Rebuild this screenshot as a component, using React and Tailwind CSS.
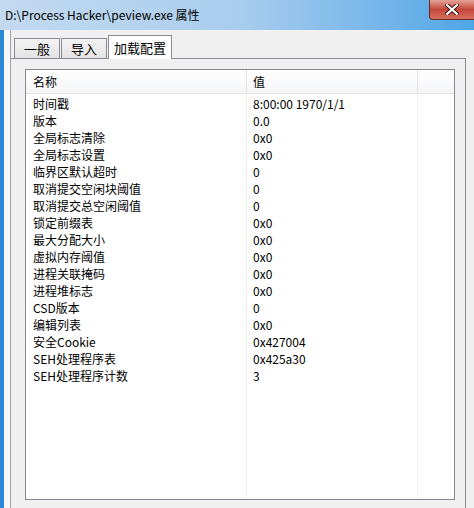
import React from 'react';

const rows = [
  ['时间戳', '8:00:00 1970/1/1'],
  ['版本', '0.0'],
  ['全局标志清除', '0x0'],
  ['全局标志设置', '0x0'],
  ['临界区默认超时', '0'],
  ['取消提交空闲块阈值', '0'],
  ['取消提交总空闲阈值', '0'],
  ['锁定前缀表', '0x0'],
  ['最大分配大小', '0x0'],
  ['虚拟内存阈值', '0x0'],
  ['进程关联掩码', '0x0'],
  ['进程堆标志', '0x0'],
  ['CSD版本', '0'],
  ['编辑列表', '0x0'],
  ['安全Cookie', '0x427004'],
  ['SEH处理程序表', '0x425a30'],
  ['SEH处理程序计数', '3'],
];

const Tab = ({ label, active }) =>
  active ? (
    <div className="relative z-10 -mb-px flex h-[24px] w-[64px] items-center justify-center border border-b-0 border-[#898c95] bg-white text-[13px]">
      {label}
    </div>
  ) : (
    <div className="mt-[3px] flex h-[20px] w-[46px] items-center justify-center border border-b-0 border-[#898c95] bg-gradient-to-b from-[#f3f3f3] to-[#e3e3e3] text-[13px]">
      {label}
    </div>
  );

export default function App() {
  return (
    <div
      className="relative h-[508px] w-[474px] overflow-hidden bg-[#f0f0f0] text-black"
      style={{ fontFamily: '"Noto Sans CJK SC", "Noto Sans", sans-serif' }}
    >
      {/* title bar */}
      <div className="flex h-[30px] items-start bg-gradient-to-r from-[#c3daf0] via-[#a9cdee] to-[#4ea5e6] pt-[6px] pl-[5px] text-[12px] leading-[18px]">
        D:\Process Hacker\peview.exe 属性
      </div>
      <div className="absolute right-0 top-0 flex h-[20px] w-[45px] items-center justify-center rounded-bl-[4px] border border-t-0 border-r-0 border-[#6b2a25] bg-gradient-to-b from-[#e3a397] via-[#c4463a] to-[#d8705d]">
        <svg width="14" height="11" viewBox="0 0 14 11">
          <path d="M2 1 L12 10 M12 1 L2 10" stroke="#3a1410" strokeWidth="4" strokeLinecap="square" />
          <path d="M2 1 L12 10 M12 1 L2 10" stroke="#fff" strokeWidth="2.2" strokeLinecap="square" />
        </svg>
      </div>

      <div className="flex h-[478px]">
        {/* left frame */}
        <div className="w-[4px] bg-[#2b8ad6]" />
        <div className="w-[6px] bg-[#f6f8fb]" />
        <div className="w-px bg-[#a0a0a0]" />

        <div className="flex flex-1 flex-col pt-[4px]">
          {/* tabs */}
          <div className="flex h-[24px] items-end gap-[1px] pl-[3px]">
            <Tab label="一般" />
            <Tab label="导入" />
            <Tab label="加载配置" active />
          </div>

          {/* tab page */}
          <div className="mr-[8px] flex flex-1 border border-b-0 border-l-0 border-[#898c95] bg-[#f0f0f0] pt-[10px] pl-[14px] pr-[10px]">
            <div className="relative flex flex-1 flex-col border border-[#828790] bg-white" style={{ height: 431 }}>
              {/* column lines */}
              <div className="absolute bottom-0 left-[220px] top-0 w-px bg-[#f0f0f0]" />
              <div className="absolute bottom-0 left-[391px] top-0 w-px bg-[#f2f2f2]" />

              {/* header */}
              <div className="relative flex h-[24px] border-b border-[#e5e5e5] bg-gradient-to-b from-white to-[#f4f5f7] text-[12px]">
                <div className="flex w-[220px] items-center pl-[7px]">名称</div>
                <div className="flex w-[171px] items-center border-l border-[#e3e3e3] pl-[6px]">值</div>
                <div className="flex-1 border-l border-[#e3e3e3]" />
              </div>

              {/* rows */}
              <div className="relative flex flex-col pt-[1px] text-[12px]">
                {rows.map(([name, value]) => (
                  <div key={name} className="flex h-[17px] items-center">
                    <div className="w-[220px] pl-[7px]">{name}</div>
                    <div className="pl-[7px]">{value}</div>
                  </div>
                ))}
              </div>
            </div>
          </div>
        </div>
      </div>
    </div>
  );
}
